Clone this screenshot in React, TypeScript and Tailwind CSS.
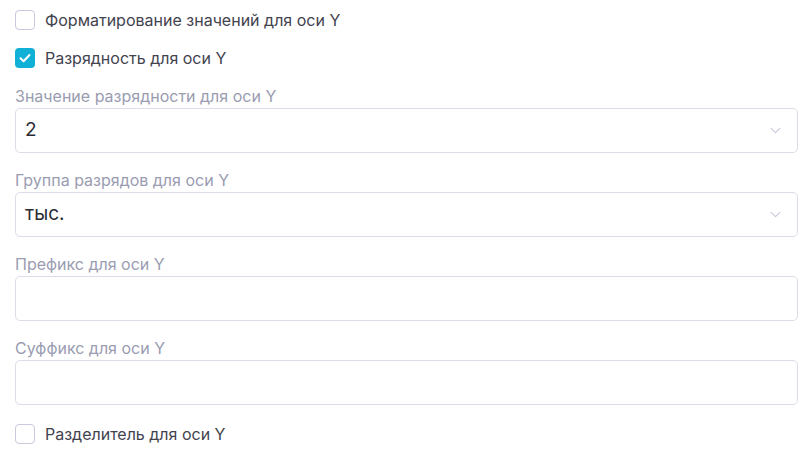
import React from 'react';

const Checkbox: React.FC<{ checked?: boolean; label: string }> = ({ checked, label }) => (
    <label className="flex items-center h-5 cursor-pointer">
        {checked ? (
            <span className="w-5 h-5 rounded-[4px] bg-[#11b0d6] flex items-center justify-center">
                <svg viewBox="0 0 20 20" className="w-5 h-5" fill="none" stroke="white" strokeWidth={2} strokeLinecap="round" strokeLinejoin="round">
                    <path d="M5.5 10.3 8.6 13.3 14.5 7" />
                </svg>
            </span>
        ) : (
            <span className="w-5 h-5 rounded-[4px] border border-[#c9cade] bg-white" />
        )}
        <span className="ml-[10px] text-[16px] leading-5 text-[#42434e]">{label}</span>
    </label>
);

const Field: React.FC<{ label: string; value?: string; select?: boolean }> = ({ label, value, select }) => (
    <div className="flex flex-col">
        <div className="text-[16px] leading-5 text-[#9a9cb1] mb-[2px]">{label}</div>
        <div className="h-[45px] rounded-[5px] border border-[#dddde9] bg-white flex items-center pl-[9px] pr-[16px]">
            <span className="flex-1 text-[19px] text-[#2a2b33]">{value}</span>
            {select && (
                <svg viewBox="0 0 12 8" className="w-[11px] h-[7px]" fill="none" stroke="#c6c7d8" strokeWidth={1.2} strokeLinecap="round" strokeLinejoin="round">
                    <path d="M1 1.5 6 6.5 11 1.5" />
                </svg>
            )}
        </div>
    </div>
);

export default function App() {
    return (
        <div className="w-[812px] h-[471px] bg-white px-[15px] pt-[10px]" style={{ fontFamily: 'Inter, "Noto Sans", sans-serif' }}>
            <div className="w-[783px] flex flex-col gap-[18px]">
                <Checkbox label="Форматирование значений для оси Y" />
                <Checkbox checked label="Разрядность для оси Y" />
                <div className="flex flex-col gap-[17px]">
                    <Field label="Значение разрядности для оси Y" value="2" select />
                    <Field label="Группа разрядов для оси Y" value="тыс." select />
                    <Field label="Префикс для оси Y" />
                    <Field label="Суффикс для оси Y" />
                </div>
                <div className="mt-[1px]">
                    <Checkbox label="Разделитель для оси Y" />
                </div>
            </div>
        </div>
    );
}
